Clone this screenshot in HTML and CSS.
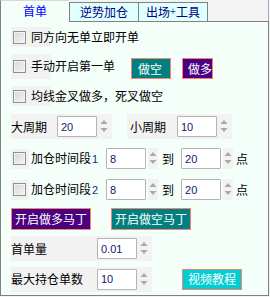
FILE: index.html
```html
<!DOCTYPE html>
<html>
<head>
<meta charset="utf-8">
<link rel="stylesheet" href="styles.css">
</head>
<body>
<div class="win">
  <div class="tabs">
    <div class="tab active">首单</div>
    <div class="tab t2">逆势加仓</div>
    <div class="tab t3">出场<span class="plus">+</span>工具</div>
  </div>
  <div class="panel">
    <div class="row r1">
      <label class="chk"><span class="box"></span><span class="txt">同方向无单立即开单</span></label>
    </div>
    <div class="row r2">
      <label class="chk lift w120"><span class="box"></span><span class="txt">手动开启第一单</span></label>
      <span class="btn teal w40">做空</span>
      <span class="btn indigo w31">做多</span>
    </div>
    <div class="row r3">
      <label class="chk"><span class="box"></span><span class="txt">均线金叉做多，死叉做空</span></label>
    </div>
    <div class="row r4">
      <div class="grp">
        <span class="lbl w46">大周期</span>
        <span class="inp">20</span>
        <span class="spin"><svg width="10" height="21" viewBox="0 0 10 21"><polygon points="1.5,8 5,4 8.5,8" /><polygon points="1.5,12 5,16 8.5,12" /></svg></span>
      </div>
      <div class="grp g2">
        <span class="lbl w47">小周期</span>
        <span class="inp">10</span>
        <span class="spin"><svg width="10" height="21" viewBox="0 0 10 21"><polygon points="1.5,8 5,4 8.5,8" /><polygon points="1.5,12 5,16 8.5,12" /></svg></span>
      </div>
    </div>
    <div class="row r5">
      <label class="chk plain w95"><span class="box"></span><span class="txt">加仓时间段<span class="num">1</span></span></label>
      <span class="inp">8</span>
      <span class="spin"><svg width="10" height="21" viewBox="0 0 10 21"><polygon points="1.5,8 5,4 8.5,8" /><polygon points="1.5,12 5,16 8.5,12" /></svg></span>
      <span class="word dao">到</span>
      <span class="inp">20</span>
      <span class="spin"><svg width="10" height="21" viewBox="0 0 10 21"><polygon points="1.5,8 5,4 8.5,8" /><polygon points="1.5,12 5,16 8.5,12" /></svg></span>
      <span class="word dian">点</span>
    </div>
    <div class="row r6">
      <label class="chk plain w95"><span class="box"></span><span class="txt">加仓时间段<span class="num">2</span></span></label>
      <span class="inp">8</span>
      <span class="spin"><svg width="10" height="21" viewBox="0 0 10 21"><polygon points="1.5,8 5,4 8.5,8" /><polygon points="1.5,12 5,16 8.5,12" /></svg></span>
      <span class="word dao">到</span>
      <span class="inp">20</span>
      <span class="spin"><svg width="10" height="21" viewBox="0 0 10 21"><polygon points="1.5,8 5,4 8.5,8" /><polygon points="1.5,12 5,16 8.5,12" /></svg></span>
      <span class="word dian">点</span>
    </div>
    <div class="row r7">
      <span class="btn indigo w80">开启做多马丁</span>
      <span class="btn teal w80 gap20">开启做空马丁</span>
    </div>
    <div class="row r8">
      <div class="grp">
        <span class="lbl w86">首单量</span>
        <span class="inp">0.01</span>
        <span class="spin"><svg width="10" height="21" viewBox="0 0 10 21"><polygon points="1.5,8 5,4 8.5,8" /><polygon points="1.5,12 5,16 8.5,12" /></svg></span>
      </div>
    </div>
    <div class="row r9">
      <div class="grp">
        <span class="lbl w86">最大持仓单数</span>
        <span class="inp">10</span>
        <span class="spin"><svg width="10" height="21" viewBox="0 0 10 21"><polygon points="1.5,8 5,4 8.5,8" /><polygon points="1.5,12 5,16 8.5,12" /></svg></span>
      </div>
      <span class="btn turq w60 gap30">视频教程</span>
    </div>
  </div>
</div>
</body>
</html>
```
FILE: styles.css
```css
html, body {
  margin: 0;
  padding: 0;
  background: #f3f3f3;
}
body {
  width: 270px;
  height: 297px;
  overflow: hidden;
  font-family: "Noto Sans CJK SC", "Noto Sans", sans-serif;
  font-size: 12px;
  color: #000;
}
.win {
  width: 269px;
}
.tabs {
  display: flex;
  align-items: flex-end;
  height: 21px;
  border-right: 1px solid #a4a8b8;
  box-sizing: border-box;
}
.tab {
  box-sizing: border-box;
  height: 19px;
  background: #e0ffff;
  color: #000080;
  border-top: 1px solid #808080;
  border-left: 1px solid #808080;
  display: flex;
  align-items: center;
  justify-content: center;
  line-height: 1;
}
.tab.active {
  width: 69px;
  height: 22px;
  margin-bottom: -1px;
  background: #f5fffa;
  color: #0000ff;
  border-top: 1px solid #d8d8d8;
  position: relative;
  z-index: 1;
  padding-bottom: 1px;
}
.tab.t2 {
  width: 69px;
}
.tab.t3 {
  width: 70px;
  border-right: 1px solid #808080;
}
.plus {
  font-family: "Liberation Sans", sans-serif;
  font-size: 10px;
  color: #3050a0;
}
.panel {
  box-sizing: border-box;
  height: 275px;
  background: #f5fffa;
  border: 1px solid #808080;
  padding-top: 1px;
}
.row {
  display: flex;
  align-items: center;
  padding-left: 10px;
}
.r1 { margin-top: 4px; height: 20px; }
.r2 { margin-top: 11px; height: 21px; }
.r3 { margin-top: 7px; height: 20px; }
.r4 { margin-top: 10px; height: 21px; }
.r5 { margin-top: 11px; height: 21px; }
.r6 { margin-top: 10px; height: 21px; }
.r7 { margin-top: 8px; height: 22px; }
.r8 { margin-top: 8px; height: 21px; }
.r9 { margin-top: 9px; height: 22px; }

.chk {
  display: flex;
  align-items: center;
  height: 20px;
  background: linear-gradient(to right, #f2f2f2 40px, transparent 40px);
  white-space: nowrap;
}
.chk.plain {
  background: linear-gradient(to right, #f2f2f2 18px, transparent 18px);
}
.chk.lift {
  margin-bottom: 5px;
  height: 25px;
}
.box {
  box-sizing: border-box;
  width: 13px;
  height: 13px;
  margin-left: 2px;
  border: 1px solid #8e8f8f;
  background: linear-gradient(135deg, #d6d6d6, #f6f6f6);
  box-shadow: inset 0 0 0 1px #f4f4f4;
}
.txt {
  margin-left: 5px;
  line-height: 1;
}
.num {
  font-family: "Liberation Sans", sans-serif;
  font-size: 11px;
  color: #1a2a7a;
  margin-left: 1px;
}
.w120 { width: 120px; }
.w95 { width: 95px; }
.w46 { width: 46px; }
.w47 { width: 47px; }
.w86 { width: 86px; }

.btn {
  box-sizing: border-box;
  height: 21px;
  border: 1px solid #fa8072;
  color: #fff;
  display: flex;
  align-items: center;
  line-height: 1;
  white-space: nowrap;
}
.r7 .btn { height: 22px; }
.teal { background: #008080; }
.indigo { background: #4b0082; }
.turq { background: #00ced1; }
.w40 { width: 40px; padding-left: 6px; }
.w31 { width: 31px; padding-left: 5px; margin-left: 11px; }
.w80 { width: 80px; justify-content: center; }
.w60 { width: 60px; justify-content: center; }
.gap20 { margin-left: 20px; }
.gap30 { margin-left: 30px; }

.grp {
  display: flex;
  align-items: center;
  height: 25px;
  background: #f2f2f2;
  padding-right: 3px;
}
.g2 {
  margin-left: 15px;
  padding-left: 3px;
}
.lbl {
  line-height: 1;
  white-space: nowrap;
}
.inp {
  box-sizing: border-box;
  width: 40px;
  height: 21px;
  background: #fff;
  border: 1px solid #b4b4b4;
  border-radius: 1px;
  font-family: "Liberation Sans", sans-serif;
  font-size: 11px;
  color: #10186a;
  display: flex;
  align-items: center;
  padding-left: 3px;
}
.spin {
  width: 10px;
  height: 21px;
  margin-left: 2px;
  background: #f2f2f2;
  display: flex;
}
.spin svg {
  display: block;
  fill: #a9a9a9;
}
.word {
  line-height: 1;
}
.dao { margin-left: 4px; margin-right: 7px; }
.dian { margin-left: 3px; }
```
